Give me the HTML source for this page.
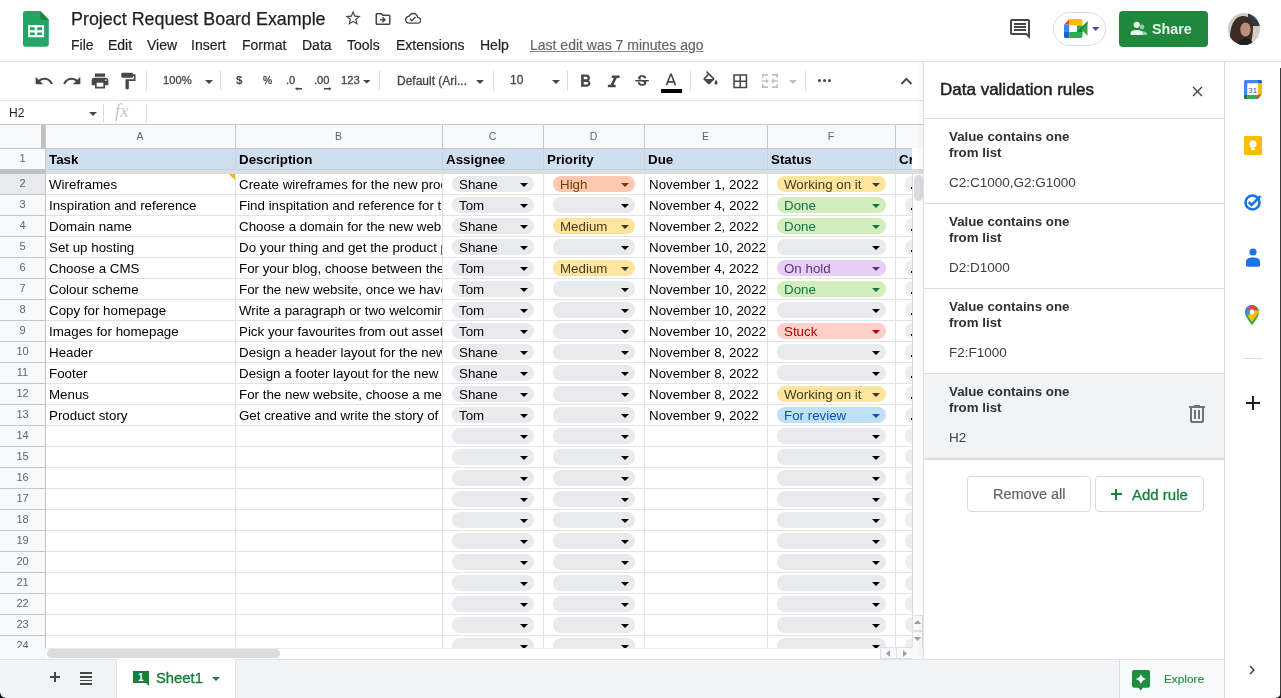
<!DOCTYPE html><html><head><meta charset="utf-8"><style>
html,body{margin:0;padding:0}
body{width:1281px;height:698px;overflow:hidden;position:relative;font-family:"Liberation Sans",sans-serif;background:#fff;color:#202124}
.a{position:absolute}
.t{position:absolute;white-space:nowrap;line-height:1;will-change:transform}
</style></head><body>
<svg class="a" style="left:23px;top:10.7px" width="26" height="36" viewBox="0 0 26 36">
<path d="M2.5 0H17.2L25.8 8.8V33.3C25.8 34.7 24.7 35.8 23.3 35.8H2.5C1.1 35.8 0 34.7 0 33.3V2.5C0 1.1 1.1 0 2.5 0Z" fill="#23A566"/>
<path d="M17.2 0L25.8 8.8H19.2C18.1 8.8 17.2 7.9 17.2 6.8Z" fill="#16873F"/>
<path d="M5.1 14.1H21.1V26.2H5.1Z M6.9 16.3V19.3H11.7V16.3Z M14.2 16.3V19.3H19V16.3Z M6.9 21.4V24.1H11.7V21.4Z M14.2 21.4V24.1H19V21.4Z" fill="#fff" fill-rule="evenodd"/>
</svg>
<div class="t " style="left:71.4px;top:10.85px;font-size:17.9px;color:#1f1f1f;-webkit-text-stroke:0.25px #1f1f1f">Project Request Board Example</div>
<svg class="a" style="left:343.7px;top:9.2px" width="18.2" height="18.2" viewBox="0 0 24 24" preserveAspectRatio="none"><path fill="#444746" d="M22 9.24l-7.19-.62L12 2 9.19 8.63 2 9.24l5.46 4.73L5.82 21 12 17.27 18.18 21l-1.63-7.03L22 9.24zM12 15.4l-3.76 2.27 1-4.28-3.32-2.88 4.38-.38L12 6.1l1.71 4.04 4.38.38-3.32 2.88 1 4.28L12 15.4z"/></svg>
<svg class="a" style="left:373.5px;top:9.8px" width="18" height="18" viewBox="0 0 24 24" preserveAspectRatio="none"><path fill="#444746" d="M20 6h-8l-2-2H4c-1.1 0-2 .9-2 2v12c0 1.1.9 2 2 2h16c1.1 0 2-.9 2-2V8c0-1.1-.9-2-2-2zm0 12H4V6h5.17l2 2H20v10zm-7.84-6H8v2h4.16l-1.59 1.59L11.99 17 16 13.01 11.99 9l-1.41 1.41L12.16 12z"/></svg>
<svg class="a" style="left:404.6px;top:10.05px" width="16.5" height="16.5" viewBox="0 0 24 24" preserveAspectRatio="none"><path fill="#444746" d="M19.35 10.04C18.67 6.59 15.64 4 12 4 9.11 4 6.6 5.64 5.35 8.040 2.34 8.36 0 10.91 0 14c0 3.31 2.69 6 6 6h13c2.76 0 5-2.240 5-5 0-2.64-2.05-4.78-4.65-4.96zM19 18H6c-2.21 0-4-1.79-4-4 0-2.05 1.53-3.76 3.56-3.97l1.07-.11.5-.95C8.08 7.14 9.94 6 12 6c2.62 0 4.88 1.86 5.39 4.43l.3 1.5 1.53.11c1.56.1 2.78 1.41 2.78 2.96 0 1.65-1.35 3-3 3zm-9-3.82l-2.09-2.09L6.5 13.5 10 17l6.01-6.01-1.41-1.41z"/></svg>
<div class="t " style="left:71.2px;top:37.85px;font-size:14px;color:#1f1f1f;-webkit-text-stroke:0.2px #1f1f1f">File</div>
<div class="t " style="left:107.8px;top:37.85px;font-size:14px;color:#1f1f1f;-webkit-text-stroke:0.2px #1f1f1f">Edit</div>
<div class="t " style="left:146.6px;top:37.85px;font-size:14px;color:#1f1f1f;-webkit-text-stroke:0.2px #1f1f1f">View</div>
<div class="t " style="left:191.3px;top:37.85px;font-size:14px;color:#1f1f1f;-webkit-text-stroke:0.2px #1f1f1f">Insert</div>
<div class="t " style="left:242.2px;top:37.85px;font-size:14px;color:#1f1f1f;-webkit-text-stroke:0.2px #1f1f1f">Format</div>
<div class="t " style="left:302.2px;top:37.85px;font-size:14px;color:#1f1f1f;-webkit-text-stroke:0.2px #1f1f1f">Data</div>
<div class="t " style="left:346.5px;top:37.85px;font-size:14px;color:#1f1f1f;-webkit-text-stroke:0.2px #1f1f1f">Tools</div>
<div class="t " style="left:395.6px;top:37.85px;font-size:14px;color:#1f1f1f;-webkit-text-stroke:0.2px #1f1f1f">Extensions</div>
<div class="t " style="left:480px;top:37.85px;font-size:14px;color:#1f1f1f;-webkit-text-stroke:0.2px #1f1f1f">Help</div>
<div class="t " style="left:530.2px;top:37.85px;font-size:14px;color:#5f6368;-webkit-text-stroke:0.15px #5f6368"><span style="text-decoration:underline;text-decoration-color:#80868b">Last edit was 7 minutes ago</span></div>
<svg class="a" style="left:1008px;top:17px" width="24" height="24" viewBox="0 0 24 24" preserveAspectRatio="none"><path fill="#444746" d="M21.99 4c0-1.1-.89-2-1.99-2H4c-1.1 0-2 .9-2 2v12c0 1.1.9 2 2 2h14l4 4-.01-18zM20 4v13.17L18.83 16H4V4h16zM6 12h12v2H6zm0-3h12v2H6zm0-3h12v2H6z"/></svg>
<div class="a" style="left:1053px;top:11.5px;width:53px;height:34px;border:1px solid #dadce0;border-radius:18px;box-sizing:border-box;background:#fff"></div>
<svg class="a" style="left:1064px;top:19px" width="24" height="19" viewBox="0 0 24 19">
<path d="M0 5.5H5.5V13H0Z" fill="#4285f4"/>
<path d="M0 13H5.5V19H1.6C.7 19 0 18.3 0 17.4Z" fill="#1967d2"/>
<path d="M5.5 0V5.5H0Z" fill="#ea4335"/>
<path d="M5.5 0H16.4C17.5 0 18.5 .9 18.5 2V6.5H5.5Z" fill="#fbbc04"/>
<path d="M5.5 13H18.5V16.9C18.5 18.1 17.6 19 16.4 19H5.5Z" fill="#34a853"/>
<path d="M13 6.5H18.5V13H13Z" fill="#34a853"/>
<path d="M13 13L18.5 7.5V13Z" fill="#188038"/>
<path d="M18.5 7.2L23.5 2.2V16.8L18.5 11.8Z" fill="#34a853"/>
<path d="M13 13L23.5 2.2V5L17 11.5Z" fill="#1e8e3e"/>
<path d="M5.5 6.5H13V13H5.5Z" fill="#fff"/>
</svg>
<svg class="a" style="left:1092.3px;top:27px" width="7.5" height="4" viewBox="0 0 8 4" preserveAspectRatio="none"><path d="M0 0H8L4 4Z" fill="#3f51a0"/></svg>
<div class="a" style="left:1119px;top:11px;width:89px;height:36px;background:#1f883d;border-radius:4px"></div>
<svg class="a" style="left:1130px;top:21px" width="18" height="15" viewBox="0 0 18 15">
<circle cx="12" cy="6" r="2.4" fill="#8fcb9f"/>
<path d="M10.5 10.3C13 10 17 10.8 17 12.6V14H11Z" fill="#8fcb9f"/>
<circle cx="6.7" cy="3.8" r="3.1" fill="#e8f5ec"/>
<path d="M0.7 11.8C0.7 9.8 4.2 9 6.7 9C9.2 9 12.7 9.8 12.7 11.8V14H0.7Z" fill="#e8f5ec"/>
</svg>
<div class="t " style="left:1151.5px;top:22.10px;font-size:14.3px;color:#e8f5ec;font-weight:700">Share</div>
<svg class="a" style="left:1228px;top:13px" width="32" height="32" viewBox="0 0 32 32">
<defs><clipPath id="av"><circle cx="16" cy="16" r="16"/></clipPath></defs>
<g clip-path="url(#av)"><rect width="32" height="32" fill="#cfccc6"/>
<rect x="20" y="0" width="12" height="13" fill="#2e3a3f"/>
<path d="M2 32C1 18 4 3 15 3C22 3 25 8 25 14C25 20 24 27 22 32Z" fill="#3d2c25"/>
<ellipse cx="17.5" cy="16.5" rx="5.2" ry="7" fill="#b98f7c"/>
<path d="M9 32C11 27 14 25 18 25C22 25 24 28 26 32Z" fill="#1f1f1f"/>
</g></svg>
<div class="a" style="left:0px;top:61px;width:1281px;height:1px;background:#e0e2e5"></div>
<svg class="a" style="left:34px;top:71px" width="20" height="20" viewBox="0 0 24 24" preserveAspectRatio="none"><path fill="#444746" d="M12.5 8c-2.65 0-5.05.99-6.9 2.6L2 7v9h9l-3.62-3.62c1.39-1.16 3.16-1.88 5.12-1.88 3.54 0 6.55 2.31 7.6 5.5l2.37-.78C21.08 11.03 17.15 8 12.5 8z"/></svg>
<svg class="a" style="left:62px;top:71px" width="20" height="20" viewBox="0 0 24 24" preserveAspectRatio="none"><path fill="#444746" d="M18.4 10.6C16.55 8.99 14.15 8 11.5 8c-4.65 0-8.58 3.03-9.96 7.22L3.9 16c1.05-3.19 4.05-5.5 7.6-5.5 1.95 0 3.73.72 5.12 1.88L13 16h9V7l-3.6 3.6z"/></svg>
<svg class="a" style="left:90px;top:71px" width="20" height="20" viewBox="0 0 24 24" preserveAspectRatio="none"><path fill="#444746" d="M19 8H5c-1.66 0-3 1.34-3 3v6h4v4h12v-4h4v-6c0-1.66-1.34-3-3-3zm-3 11H8v-5h8v5zm3-7c-.55 0-1-.45-1-1s.45-1 1-1 1 .45 1 1-.45 1-1 1zm-1-9H6v4h12V3z"/></svg>
<svg class="a" style="left:118px;top:71px" width="20" height="20" viewBox="0 0 24 24" preserveAspectRatio="none"><path fill="#444746" d="M18 4V3c0-.55-.45-1-1-1H5c-.55 0-1 .45-1 1v4c0 .55.45 1 1 1h12c.55 0 1-.45 1-1V6h1v4H9v11c0 .55.45 1 1 1h2c.55 0 1-.45 1-1v-9h8V4h-3z"/></svg>
<div class="a" style="left:146px;top:71px;width:1px;height:20px;background:#dadce0"></div>
<div class="a" style="left:220px;top:71px;width:1px;height:20px;background:#dadce0"></div>
<div class="a" style="left:379px;top:71px;width:1px;height:20px;background:#dadce0"></div>
<div class="a" style="left:493px;top:71px;width:1px;height:20px;background:#dadce0"></div>
<div class="a" style="left:567px;top:71px;width:1px;height:20px;background:#dadce0"></div>
<div class="a" style="left:690px;top:71px;width:1px;height:20px;background:#dadce0"></div>
<div class="a" style="left:805px;top:71px;width:1px;height:20px;background:#dadce0"></div>
<div class="t " style="left:162.7px;top:74.82px;font-size:11.2px;color:#444746;-webkit-text-stroke:0.3px #444746">100%</div>
<svg class="a" style="left:204.5px;top:79.8px" width="8" height="4" viewBox="0 0 8 4" preserveAspectRatio="none"><path d="M0 0H8L4 4Z" fill="#444746"/></svg>
<div class="t " style="left:236px;top:74.67px;font-size:11.5px;color:#444746;font-weight:700">$</div>
<div class="t " style="left:263.1px;top:75.77px;font-size:10.2px;color:#444746;-webkit-text-stroke:0.3px #444746">%</div>
<div class="t " style="left:286.3px;top:74.92px;font-size:11.2px;color:#444746;-webkit-text-stroke:0.3px #444746">.0</div>
<svg class="a" style="left:294.7px;top:87.3px" width="7.5" height="3.6" viewBox="0 0 7.5 3.6"><path d="M0 1.8L2.6 0V1H7.5V2.6H2.6V3.6Z" fill="#444746"/></svg>
<div class="t " style="left:313.8px;top:74.92px;font-size:11.2px;color:#444746;-webkit-text-stroke:0.3px #444746">.00</div>
<svg class="a" style="left:324.3px;top:87.3px" width="7.5" height="3.6" viewBox="0 0 7.5 3.6"><path d="M7.5 1.8L4.9 0V1H0V2.6H4.9V3.6Z" fill="#444746"/></svg>
<div class="t " style="left:341px;top:74.92px;font-size:11.2px;color:#444746;-webkit-text-stroke:0.3px #444746">123</div>
<svg class="a" style="left:362.7px;top:80.2px" width="7.5" height="3.6" viewBox="0 0 8 4" preserveAspectRatio="none"><path d="M0 0H8L4 4Z" fill="#444746"/></svg>
<div class="t " style="left:396.6px;top:74.84px;font-size:12px;color:#444746;-webkit-text-stroke:0.3px #444746">Default (Ari...</div>
<svg class="a" style="left:476.4px;top:80.3px" width="8" height="4" viewBox="0 0 8 4" preserveAspectRatio="none"><path d="M0 0H8L4 4Z" fill="#444746"/></svg>
<div class="t " style="left:509.9px;top:74.14px;font-size:12px;color:#444746;-webkit-text-stroke:0.3px #444746">10</div>
<svg class="a" style="left:551.5px;top:79.8px" width="8" height="4" viewBox="0 0 8 4" preserveAspectRatio="none"><path d="M0 0H8L4 4Z" fill="#444746"/></svg>
<svg class="a" style="left:574.7px;top:71.4px" width="20.9" height="20.9" viewBox="0 0 24 24" preserveAspectRatio="none"><path fill="#444746" d="M15.6 10.79c.97-.67 1.65-1.77 1.65-2.79 0-2.26-1.75-4-4-4H7v14h7.04c2.09 0 3.71-1.7 3.71-3.79 0-1.52-.86-2.82-2.15-3.42zM10 6.5h3c.83 0 1.5.67 1.5 1.5s-.67 1.5-1.5 1.5h-3v-3zm3.5 9H10v-3h3.5c.83 0 1.5.67 1.5 1.5s-.67 1.5-1.5 1.5z"/></svg>
<svg class="a" style="left:602.05px;top:71.5px" width="23.4" height="20.4" viewBox="0 0 24 24" preserveAspectRatio="none"><path fill="#444746" d="M10 4v3h2.21l-3.42 8H6v3h8v-3h-2.21l3.42-8H18V4z"/></svg>
<svg class="a" style="left:632.8px;top:72.7px" width="18.1" height="17" viewBox="0 0 24 24" preserveAspectRatio="none"><path fill="#444746" d="M7.24 8.75c-.26-.48-.39-1.03-.39-1.67 0-.61.13-1.16.4-1.67.26-.5.63-.93 1.11-1.290.48-.35 1.05-.63 1.7-.83.66-.19 1.39-.29 2.18-.29.81 0 1.54.11 2.21.34.66.22 1.23.54 1.69.94.47.4.83.88 1.08 1.430.25.55.38 1.15.38 1.81h-3.01c0-.31-.05-.59-.15-.85-.09-.27-.24-.49-.44-.68-.2-.19-.45-.33-.75-.44-.3-.1-.66-.16-1.06-.16-.39 0-.74.04-1.03.13-.29.09-.53.21-.72.36-.19.16-.34.34-.44.55-.1.21-.15.43-.15.66 0 .48.25.88.74 1.21.38.25.77.48 1.41.7H7.39c-.05-.08-.11-.17-.15-.25zM21 12v-2H3v2h9.62c.18.07.4.14.55.2.37.17.66.34.87.51.21.17.35.36.43.57.07.2.11.43.11.69 0 .23-.05.45-.14.66-.09.2-.23.38-.42.53-.19.15-.42.26-.71.35-.29.08-.63.13-1.010.13-.43 0-.83-.04-1.18-.13s-.66-.23-.91-.42c-.25-.19-.45-.44-.59-.75-.14-.31-.25-.76-.25-1.21H6.4c0 .55.08 1.13.24 1.58.16.45.37.85.65 1.21.28.35.6.66.98.92.37.26.78.48 1.22.65.44.17.9.3 1.38.39.48.08.96.13 1.44.13.8 0 1.53-.09 2.18-.28s1.21-.45 1.67-.79c.46-.34.82-.77 1.07-1.27s.38-1.07.38-1.71c0-.6-.1-1.14-.31-1.61-.05-.11-.11-.23-.17-.33H21z"/></svg>
<svg class="a" style="left:660.9px;top:70.5px" width="19.9" height="20.1" viewBox="0 0 24 24" preserveAspectRatio="none"><path fill="#444746" d="M11 3L5.5 17h2.25l1.12-3h6.25l1.12 3h2.25L13 3h-2zm-1.38 9L12 5.67 14.38 12H9.62z"/></svg>
<div class="a" style="left:661px;top:89px;width:21px;height:4px;background:#000"></div>
<svg class="a" style="left:701px;top:71px" width="19" height="19" viewBox="0 0 24 24" preserveAspectRatio="none"><path fill="#444746" d="M16.56 8.94L7.62 0 6.21 1.41l2.38 2.38-5.15 5.15c-.59.59-.59 1.54 0 2.12l5.5 5.5c.29.29.68.44 1.06.44s.77-.15 1.06-.44l5.5-5.5c.59-.58.59-1.53 0-2.12zM5.21 10L10 5.21 14.79 10H5.21zM19 11.5s-2 2.17-2 3.5c0 1.1.9 2 2 2s2-.9 2-2c0-1.33-2-3.5-2-3.5z"/></svg>
<svg class="a" style="left:730.8px;top:71.9px" width="18.5" height="18.5" viewBox="0 0 24 24" preserveAspectRatio="none"><path fill="#444746" d="M3 3v18h18V3H3zm8 16H5v-6h6v6zm0-8H5V5h6v6zm8 8h-6v-6h6v6zm0-8h-6V5h6v6z"/></svg>
<svg class="a" style="left:762px;top:74.2px" width="16" height="14" viewBox="0 0 16 14"><path fill="#bdc1c6" d="M0 0H6V1.7H1.7V3.8H0ZM16 0H10V1.7H14.3V3.8H16ZM0 14H6V12.3H1.7V10.2H0ZM16 14H10V12.3H14.3V10.2H16ZM0 6.2H4V4.3L6.9 7L4 9.7V7.8H0ZM16 6.2H12V4.3L9.1 7L12 9.7V7.8H16Z"/></svg>
<svg class="a" style="left:788.7px;top:80px" width="8" height="4" viewBox="0 0 8 4" preserveAspectRatio="none"><path d="M0 0H8L4 4Z" fill="#bdc1c6"/></svg>
<div class="a" style="left:817.5px;top:79px;width:3px;height:3px;background:#444746;border-radius:50%"></div>
<div class="a" style="left:822.5px;top:79px;width:3px;height:3px;background:#444746;border-radius:50%"></div>
<div class="a" style="left:827.5px;top:79px;width:3px;height:3px;background:#444746;border-radius:50%"></div>
<svg class="a" style="left:894.9px;top:69.8px" width="22.8" height="22.8" viewBox="0 0 24 24" preserveAspectRatio="none"><path fill="#444746" d="M12 8l-6 6 1.41 1.41L12 10.83l4.59 4.58L18 14z"/></svg>
<div class="a" style="left:0px;top:100px;width:923px;height:1px;background:#e0e2e5"></div>
<div class="t " style="left:8.5px;top:106.54px;font-size:12px;color:#1f1f1f">H2</div>
<svg class="a" style="left:89.4px;top:112px" width="8" height="4" viewBox="0 0 8 4" preserveAspectRatio="none"><path d="M0 0H8L4 4Z" fill="#444746"/></svg>
<div class="a" style="left:103px;top:104px;width:1px;height:19px;background:#dadce0"></div>
<div class="t " style="left:115px;top:101.64px;font-size:18.5px;color:#c4c7c5;font-family:'Liberation Serif',serif"><i>fx</i></div>
<div class="a" style="left:146px;top:104px;width:1px;height:19px;background:#dadce0"></div>
<div class="a" style="left:0px;top:124px;width:923px;height:1px;background:#c7c7c7"></div>
<div class="a" style="left:0px;top:125px;width:923px;height:23px;background:#f8f9fa"></div>
<div class="a" style="left:0px;top:148px;width:912px;height:1px;background:#c7c7c7"></div>
<div class="a" style="left:41px;top:125px;width:4px;height:23px;background:#c0c0c0"></div>
<div class="t" style="left:45px;width:190px;top:130.86px;font-size:10.5px;text-align:center;color:#5f6368">A</div>
<div class="t" style="left:235px;width:207px;top:130.86px;font-size:10.5px;text-align:center;color:#5f6368">B</div>
<div class="t" style="left:442px;width:101px;top:130.86px;font-size:10.5px;text-align:center;color:#5f6368">C</div>
<div class="t" style="left:543px;width:101px;top:130.86px;font-size:10.5px;text-align:center;color:#5f6368">D</div>
<div class="t" style="left:644px;width:123px;top:130.86px;font-size:10.5px;text-align:center;color:#5f6368">E</div>
<div class="t" style="left:767px;width:128px;top:130.86px;font-size:10.5px;text-align:center;color:#5f6368">F</div>
<div class="a" style="left:235px;top:125px;width:1px;height:23px;background:#c7c7c7"></div>
<div class="a" style="left:442px;top:125px;width:1px;height:23px;background:#c7c7c7"></div>
<div class="a" style="left:543px;top:125px;width:1px;height:23px;background:#c7c7c7"></div>
<div class="a" style="left:644px;top:125px;width:1px;height:23px;background:#c7c7c7"></div>
<div class="a" style="left:767px;top:125px;width:1px;height:23px;background:#c7c7c7"></div>
<div class="a" style="left:895px;top:125px;width:1px;height:23px;background:#c7c7c7"></div>
<div class="a" style="left:45px;top:149px;width:867px;height:20px;background:#cfdff0"></div>
<div class="a" style="left:0px;top:149px;width:45px;height:20px;background:#f8f9fa"></div>
<div class="a" style="left:0px;top:169px;width:45px;height:0px;"></div>
<div class="a" style="left:45px;top:169px;width:867px;height:1px;background:#c5d3e0"></div>
<div class="a" style="left:0px;top:169px;width:45px;height:5px;background:#bfc1c4"></div>
<div class="a" style="left:45px;top:170px;width:867px;height:4px;background:#dadee3"></div>
<div class="a" style="left:912px;top:169px;width:11px;height:5px;background:#dadee3"></div>
<div class="a" style="left:45px;top:125px;width:1px;height:523px;background:#c7c7c7"></div>
<div class="a" style="left:0px;top:174px;width:45px;height:20px;background:#e8eaed"></div>
<div class="a" style="left:0px;top:195px;width:45px;height:453px;background:#f8f9fa"></div>
<div class="a" style="left:46px;top:174px;width:866px;height:474px;overflow:hidden">
<div class="a" style="left:0px;top:20px;width:866px;height:1px;background:#e2e3e3"></div>
<div class="t" style="left:3px;top:3.72px;font-size:13.33px;width:185px;overflow:hidden;padding-bottom:4px;color:#000">Wireframes</div>
<div class="t" style="left:193px;top:3.72px;font-size:13.33px;width:203px;overflow:hidden;padding-bottom:4px;color:#000">Create wireframes for the new product</div>
<div class="a" style="left:406px;top:2px;width:82px;height:16px;background:#e8eaed;border-radius:8px"></div>
<div class="t" style="left:412.5px;top:4.12px;font-size:13.33px;color:#000">Shane</div>
<svg class="a" style="left:473.5px;top:8.5px" width="8" height="4" viewBox="0 0 8 4"><path d="M0 0H8L4 4Z" fill="#000"/></svg>
<div class="a" style="left:507px;top:2px;width:82px;height:16px;background:#fcc9b0;border-radius:8px"></div>
<div class="t" style="left:513.5px;top:4.12px;font-size:13.33px;color:#753800">High</div>
<svg class="a" style="left:574.5px;top:8.5px" width="8" height="4" viewBox="0 0 8 4"><path d="M0 0H8L4 4Z" fill="#753800"/></svg>
<div class="t" style="left:602.5px;top:3.72px;font-size:13.33px;width:118px;overflow:hidden;padding-bottom:4px;color:#000">November 1, 2022</div>
<div class="a" style="left:731px;top:2px;width:109px;height:16px;background:#fde59e;border-radius:8px"></div>
<div class="t" style="left:737.5px;top:4.12px;font-size:13.33px;color:#473821">Working on it</div>
<svg class="a" style="left:825.5px;top:8.5px" width="8" height="4" viewBox="0 0 8 4"><path d="M0 0H8L4 4Z" fill="#473821"/></svg>
<div class="a" style="left:859px;top:2px;width:186px;height:16px;background:#eceef0;border-radius:8px"></div>
<svg class="a" style="left:1030.5px;top:8.5px" width="8" height="4" viewBox="0 0 8 4"><path d="M0 0H8L4 4Z" fill="#000"/></svg>
<div class="a" style="left:864.5px;top:13.300000000000011px;width:1.5px;height:1.8px;background:#000"></div>
<div class="a" style="left:0px;top:41px;width:866px;height:1px;background:#e2e3e3"></div>
<div class="t" style="left:3px;top:24.72px;font-size:13.33px;width:185px;overflow:hidden;padding-bottom:4px;color:#000">Inspiration and reference</div>
<div class="t" style="left:193px;top:24.72px;font-size:13.33px;width:203px;overflow:hidden;padding-bottom:4px;color:#000">Find inspitation and reference for the</div>
<div class="a" style="left:406px;top:23px;width:82px;height:16px;background:#e8eaed;border-radius:8px"></div>
<div class="t" style="left:412.5px;top:25.12px;font-size:13.33px;color:#000">Tom</div>
<svg class="a" style="left:473.5px;top:29.5px" width="8" height="4" viewBox="0 0 8 4"><path d="M0 0H8L4 4Z" fill="#000"/></svg>
<div class="a" style="left:507px;top:23px;width:82px;height:16px;background:#e8eaed;border-radius:8px"></div>
<svg class="a" style="left:574.5px;top:29.5px" width="8" height="4" viewBox="0 0 8 4"><path d="M0 0H8L4 4Z" fill="#000"/></svg>
<div class="t" style="left:602.5px;top:24.72px;font-size:13.33px;width:118px;overflow:hidden;padding-bottom:4px;color:#000">November 4, 2022</div>
<div class="a" style="left:731px;top:23px;width:109px;height:16px;background:#d4edbc;border-radius:8px"></div>
<div class="t" style="left:737.5px;top:25.12px;font-size:13.33px;color:#11734b">Done</div>
<svg class="a" style="left:825.5px;top:29.5px" width="8" height="4" viewBox="0 0 8 4"><path d="M0 0H8L4 4Z" fill="#11734b"/></svg>
<div class="a" style="left:859px;top:23px;width:186px;height:16px;background:#eceef0;border-radius:8px"></div>
<svg class="a" style="left:1030.5px;top:29.5px" width="8" height="4" viewBox="0 0 8 4"><path d="M0 0H8L4 4Z" fill="#000"/></svg>
<div class="a" style="left:864.5px;top:34.30000000000001px;width:1.5px;height:1.8px;background:#000"></div>
<div class="a" style="left:0px;top:62px;width:866px;height:1px;background:#e2e3e3"></div>
<div class="t" style="left:3px;top:45.72px;font-size:13.33px;width:185px;overflow:hidden;padding-bottom:4px;color:#000">Domain name</div>
<div class="t" style="left:193px;top:45.72px;font-size:13.33px;width:203px;overflow:hidden;padding-bottom:4px;color:#000">Choose a domain for the new website</div>
<div class="a" style="left:406px;top:44px;width:82px;height:16px;background:#e8eaed;border-radius:8px"></div>
<div class="t" style="left:412.5px;top:46.12px;font-size:13.33px;color:#000">Shane</div>
<svg class="a" style="left:473.5px;top:50.5px" width="8" height="4" viewBox="0 0 8 4"><path d="M0 0H8L4 4Z" fill="#000"/></svg>
<div class="a" style="left:507px;top:44px;width:82px;height:16px;background:#fde59e;border-radius:8px"></div>
<div class="t" style="left:513.5px;top:46.12px;font-size:13.33px;color:#473821">Medium</div>
<svg class="a" style="left:574.5px;top:50.5px" width="8" height="4" viewBox="0 0 8 4"><path d="M0 0H8L4 4Z" fill="#473821"/></svg>
<div class="t" style="left:602.5px;top:45.72px;font-size:13.33px;width:118px;overflow:hidden;padding-bottom:4px;color:#000">November 2, 2022</div>
<div class="a" style="left:731px;top:44px;width:109px;height:16px;background:#d4edbc;border-radius:8px"></div>
<div class="t" style="left:737.5px;top:46.12px;font-size:13.33px;color:#11734b">Done</div>
<svg class="a" style="left:825.5px;top:50.5px" width="8" height="4" viewBox="0 0 8 4"><path d="M0 0H8L4 4Z" fill="#11734b"/></svg>
<div class="a" style="left:859px;top:44px;width:186px;height:16px;background:#eceef0;border-radius:8px"></div>
<svg class="a" style="left:1030.5px;top:50.5px" width="8" height="4" viewBox="0 0 8 4"><path d="M0 0H8L4 4Z" fill="#000"/></svg>
<div class="a" style="left:864.5px;top:55.30000000000001px;width:1.5px;height:1.8px;background:#000"></div>
<div class="a" style="left:0px;top:83px;width:866px;height:1px;background:#e2e3e3"></div>
<div class="t" style="left:3px;top:66.72px;font-size:13.33px;width:185px;overflow:hidden;padding-bottom:4px;color:#000">Set up hosting</div>
<div class="t" style="left:193px;top:66.72px;font-size:13.33px;width:203px;overflow:hidden;padding-bottom:4px;color:#000">Do your thing and get the product page</div>
<div class="a" style="left:406px;top:65px;width:82px;height:16px;background:#e8eaed;border-radius:8px"></div>
<div class="t" style="left:412.5px;top:67.12px;font-size:13.33px;color:#000">Shane</div>
<svg class="a" style="left:473.5px;top:71.5px" width="8" height="4" viewBox="0 0 8 4"><path d="M0 0H8L4 4Z" fill="#000"/></svg>
<div class="a" style="left:507px;top:65px;width:82px;height:16px;background:#e8eaed;border-radius:8px"></div>
<svg class="a" style="left:574.5px;top:71.5px" width="8" height="4" viewBox="0 0 8 4"><path d="M0 0H8L4 4Z" fill="#000"/></svg>
<div class="t" style="left:602.5px;top:66.72px;font-size:13.33px;width:118px;overflow:hidden;padding-bottom:4px;color:#000">November 10, 2022</div>
<div class="a" style="left:731px;top:65px;width:109px;height:16px;background:#e8eaed;border-radius:8px"></div>
<svg class="a" style="left:825.5px;top:71.5px" width="8" height="4" viewBox="0 0 8 4"><path d="M0 0H8L4 4Z" fill="#000"/></svg>
<div class="a" style="left:859px;top:65px;width:186px;height:16px;background:#eceef0;border-radius:8px"></div>
<svg class="a" style="left:1030.5px;top:71.5px" width="8" height="4" viewBox="0 0 8 4"><path d="M0 0H8L4 4Z" fill="#000"/></svg>
<div class="a" style="left:864.5px;top:76.30000000000001px;width:1.5px;height:1.8px;background:#000"></div>
<div class="a" style="left:0px;top:104px;width:866px;height:1px;background:#e2e3e3"></div>
<div class="t" style="left:3px;top:87.72px;font-size:13.33px;width:185px;overflow:hidden;padding-bottom:4px;color:#000">Choose a CMS</div>
<div class="t" style="left:193px;top:87.72px;font-size:13.33px;width:203px;overflow:hidden;padding-bottom:4px;color:#000">For your blog, choose between the</div>
<div class="a" style="left:406px;top:86px;width:82px;height:16px;background:#e8eaed;border-radius:8px"></div>
<div class="t" style="left:412.5px;top:88.12px;font-size:13.33px;color:#000">Tom</div>
<svg class="a" style="left:473.5px;top:92.5px" width="8" height="4" viewBox="0 0 8 4"><path d="M0 0H8L4 4Z" fill="#000"/></svg>
<div class="a" style="left:507px;top:86px;width:82px;height:16px;background:#fde59e;border-radius:8px"></div>
<div class="t" style="left:513.5px;top:88.12px;font-size:13.33px;color:#473821">Medium</div>
<svg class="a" style="left:574.5px;top:92.5px" width="8" height="4" viewBox="0 0 8 4"><path d="M0 0H8L4 4Z" fill="#473821"/></svg>
<div class="t" style="left:602.5px;top:87.72px;font-size:13.33px;width:118px;overflow:hidden;padding-bottom:4px;color:#000">November 4, 2022</div>
<div class="a" style="left:731px;top:86px;width:109px;height:16px;background:#e6cff2;border-radius:8px"></div>
<div class="t" style="left:737.5px;top:88.12px;font-size:13.33px;color:#5a3286">On hold</div>
<svg class="a" style="left:825.5px;top:92.5px" width="8" height="4" viewBox="0 0 8 4"><path d="M0 0H8L4 4Z" fill="#5a3286"/></svg>
<div class="a" style="left:859px;top:86px;width:186px;height:16px;background:#eceef0;border-radius:8px"></div>
<svg class="a" style="left:1030.5px;top:92.5px" width="8" height="4" viewBox="0 0 8 4"><path d="M0 0H8L4 4Z" fill="#000"/></svg>
<div class="a" style="left:864.5px;top:97.30000000000001px;width:1.5px;height:1.8px;background:#000"></div>
<div class="a" style="left:0px;top:125px;width:866px;height:1px;background:#e2e3e3"></div>
<div class="t" style="left:3px;top:108.72px;font-size:13.33px;width:185px;overflow:hidden;padding-bottom:4px;color:#000">Colour scheme</div>
<div class="t" style="left:193px;top:108.72px;font-size:13.33px;width:203px;overflow:hidden;padding-bottom:4px;color:#000">For the new website, once we have</div>
<div class="a" style="left:406px;top:107px;width:82px;height:16px;background:#e8eaed;border-radius:8px"></div>
<div class="t" style="left:412.5px;top:109.12px;font-size:13.33px;color:#000">Tom</div>
<svg class="a" style="left:473.5px;top:113.5px" width="8" height="4" viewBox="0 0 8 4"><path d="M0 0H8L4 4Z" fill="#000"/></svg>
<div class="a" style="left:507px;top:107px;width:82px;height:16px;background:#e8eaed;border-radius:8px"></div>
<svg class="a" style="left:574.5px;top:113.5px" width="8" height="4" viewBox="0 0 8 4"><path d="M0 0H8L4 4Z" fill="#000"/></svg>
<div class="t" style="left:602.5px;top:108.72px;font-size:13.33px;width:118px;overflow:hidden;padding-bottom:4px;color:#000">November 10, 2022</div>
<div class="a" style="left:731px;top:107px;width:109px;height:16px;background:#d4edbc;border-radius:8px"></div>
<div class="t" style="left:737.5px;top:109.12px;font-size:13.33px;color:#11734b">Done</div>
<svg class="a" style="left:825.5px;top:113.5px" width="8" height="4" viewBox="0 0 8 4"><path d="M0 0H8L4 4Z" fill="#11734b"/></svg>
<div class="a" style="left:859px;top:107px;width:186px;height:16px;background:#eceef0;border-radius:8px"></div>
<svg class="a" style="left:1030.5px;top:113.5px" width="8" height="4" viewBox="0 0 8 4"><path d="M0 0H8L4 4Z" fill="#000"/></svg>
<div class="a" style="left:864.5px;top:118.30000000000001px;width:1.5px;height:1.8px;background:#000"></div>
<div class="a" style="left:0px;top:146px;width:866px;height:1px;background:#e2e3e3"></div>
<div class="t" style="left:3px;top:129.72px;font-size:13.33px;width:185px;overflow:hidden;padding-bottom:4px;color:#000">Copy for homepage</div>
<div class="t" style="left:193px;top:129.72px;font-size:13.33px;width:203px;overflow:hidden;padding-bottom:4px;color:#000">Write a paragraph or two welcoming</div>
<div class="a" style="left:406px;top:128px;width:82px;height:16px;background:#e8eaed;border-radius:8px"></div>
<div class="t" style="left:412.5px;top:130.12px;font-size:13.33px;color:#000">Tom</div>
<svg class="a" style="left:473.5px;top:134.5px" width="8" height="4" viewBox="0 0 8 4"><path d="M0 0H8L4 4Z" fill="#000"/></svg>
<div class="a" style="left:507px;top:128px;width:82px;height:16px;background:#e8eaed;border-radius:8px"></div>
<svg class="a" style="left:574.5px;top:134.5px" width="8" height="4" viewBox="0 0 8 4"><path d="M0 0H8L4 4Z" fill="#000"/></svg>
<div class="t" style="left:602.5px;top:129.72px;font-size:13.33px;width:118px;overflow:hidden;padding-bottom:4px;color:#000">November 10, 2022</div>
<div class="a" style="left:731px;top:128px;width:109px;height:16px;background:#e8eaed;border-radius:8px"></div>
<svg class="a" style="left:825.5px;top:134.5px" width="8" height="4" viewBox="0 0 8 4"><path d="M0 0H8L4 4Z" fill="#000"/></svg>
<div class="a" style="left:859px;top:128px;width:186px;height:16px;background:#eceef0;border-radius:8px"></div>
<svg class="a" style="left:1030.5px;top:134.5px" width="8" height="4" viewBox="0 0 8 4"><path d="M0 0H8L4 4Z" fill="#000"/></svg>
<div class="a" style="left:864.5px;top:139.3px;width:1.5px;height:1.8px;background:#000"></div>
<div class="a" style="left:0px;top:167px;width:866px;height:1px;background:#e2e3e3"></div>
<div class="t" style="left:3px;top:150.72px;font-size:13.33px;width:185px;overflow:hidden;padding-bottom:4px;color:#000">Images for homepage</div>
<div class="t" style="left:193px;top:150.72px;font-size:13.33px;width:203px;overflow:hidden;padding-bottom:4px;color:#000">Pick your favourites from out assets</div>
<div class="a" style="left:406px;top:149px;width:82px;height:16px;background:#e8eaed;border-radius:8px"></div>
<div class="t" style="left:412.5px;top:151.12px;font-size:13.33px;color:#000">Tom</div>
<svg class="a" style="left:473.5px;top:155.5px" width="8" height="4" viewBox="0 0 8 4"><path d="M0 0H8L4 4Z" fill="#000"/></svg>
<div class="a" style="left:507px;top:149px;width:82px;height:16px;background:#e8eaed;border-radius:8px"></div>
<svg class="a" style="left:574.5px;top:155.5px" width="8" height="4" viewBox="0 0 8 4"><path d="M0 0H8L4 4Z" fill="#000"/></svg>
<div class="t" style="left:602.5px;top:150.72px;font-size:13.33px;width:118px;overflow:hidden;padding-bottom:4px;color:#000">November 10, 2022</div>
<div class="a" style="left:731px;top:149px;width:109px;height:16px;background:#ffcfc9;border-radius:8px"></div>
<div class="t" style="left:737.5px;top:151.12px;font-size:13.33px;color:#b10202">Stuck</div>
<svg class="a" style="left:825.5px;top:155.5px" width="8" height="4" viewBox="0 0 8 4"><path d="M0 0H8L4 4Z" fill="#b10202"/></svg>
<div class="a" style="left:859px;top:149px;width:186px;height:16px;background:#eceef0;border-radius:8px"></div>
<svg class="a" style="left:1030.5px;top:155.5px" width="8" height="4" viewBox="0 0 8 4"><path d="M0 0H8L4 4Z" fill="#000"/></svg>
<div class="a" style="left:864.5px;top:160.3px;width:1.5px;height:1.8px;background:#000"></div>
<div class="a" style="left:0px;top:188px;width:866px;height:1px;background:#e2e3e3"></div>
<div class="t" style="left:3px;top:171.72px;font-size:13.33px;width:185px;overflow:hidden;padding-bottom:4px;color:#000">Header</div>
<div class="t" style="left:193px;top:171.72px;font-size:13.33px;width:203px;overflow:hidden;padding-bottom:4px;color:#000">Design a header layout for the new</div>
<div class="a" style="left:406px;top:170px;width:82px;height:16px;background:#e8eaed;border-radius:8px"></div>
<div class="t" style="left:412.5px;top:172.12px;font-size:13.33px;color:#000">Shane</div>
<svg class="a" style="left:473.5px;top:176.5px" width="8" height="4" viewBox="0 0 8 4"><path d="M0 0H8L4 4Z" fill="#000"/></svg>
<div class="a" style="left:507px;top:170px;width:82px;height:16px;background:#e8eaed;border-radius:8px"></div>
<svg class="a" style="left:574.5px;top:176.5px" width="8" height="4" viewBox="0 0 8 4"><path d="M0 0H8L4 4Z" fill="#000"/></svg>
<div class="t" style="left:602.5px;top:171.72px;font-size:13.33px;width:118px;overflow:hidden;padding-bottom:4px;color:#000">November 8, 2022</div>
<div class="a" style="left:731px;top:170px;width:109px;height:16px;background:#e8eaed;border-radius:8px"></div>
<svg class="a" style="left:825.5px;top:176.5px" width="8" height="4" viewBox="0 0 8 4"><path d="M0 0H8L4 4Z" fill="#000"/></svg>
<div class="a" style="left:859px;top:170px;width:186px;height:16px;background:#eceef0;border-radius:8px"></div>
<svg class="a" style="left:1030.5px;top:176.5px" width="8" height="4" viewBox="0 0 8 4"><path d="M0 0H8L4 4Z" fill="#000"/></svg>
<div class="a" style="left:864.5px;top:181.3px;width:1.5px;height:1.8px;background:#000"></div>
<div class="a" style="left:0px;top:209px;width:866px;height:1px;background:#e2e3e3"></div>
<div class="t" style="left:3px;top:192.72px;font-size:13.33px;width:185px;overflow:hidden;padding-bottom:4px;color:#000">Footer</div>
<div class="t" style="left:193px;top:192.72px;font-size:13.33px;width:203px;overflow:hidden;padding-bottom:4px;color:#000">Design a footer layout for the new</div>
<div class="a" style="left:406px;top:191px;width:82px;height:16px;background:#e8eaed;border-radius:8px"></div>
<div class="t" style="left:412.5px;top:193.12px;font-size:13.33px;color:#000">Shane</div>
<svg class="a" style="left:473.5px;top:197.5px" width="8" height="4" viewBox="0 0 8 4"><path d="M0 0H8L4 4Z" fill="#000"/></svg>
<div class="a" style="left:507px;top:191px;width:82px;height:16px;background:#e8eaed;border-radius:8px"></div>
<svg class="a" style="left:574.5px;top:197.5px" width="8" height="4" viewBox="0 0 8 4"><path d="M0 0H8L4 4Z" fill="#000"/></svg>
<div class="t" style="left:602.5px;top:192.72px;font-size:13.33px;width:118px;overflow:hidden;padding-bottom:4px;color:#000">November 8, 2022</div>
<div class="a" style="left:731px;top:191px;width:109px;height:16px;background:#e8eaed;border-radius:8px"></div>
<svg class="a" style="left:825.5px;top:197.5px" width="8" height="4" viewBox="0 0 8 4"><path d="M0 0H8L4 4Z" fill="#000"/></svg>
<div class="a" style="left:859px;top:191px;width:186px;height:16px;background:#eceef0;border-radius:8px"></div>
<svg class="a" style="left:1030.5px;top:197.5px" width="8" height="4" viewBox="0 0 8 4"><path d="M0 0H8L4 4Z" fill="#000"/></svg>
<div class="a" style="left:864.5px;top:202.3px;width:1.5px;height:1.8px;background:#000"></div>
<div class="a" style="left:0px;top:230px;width:866px;height:1px;background:#e2e3e3"></div>
<div class="t" style="left:3px;top:213.72px;font-size:13.33px;width:185px;overflow:hidden;padding-bottom:4px;color:#000">Menus</div>
<div class="t" style="left:193px;top:213.72px;font-size:13.33px;width:203px;overflow:hidden;padding-bottom:4px;color:#000">For the new website, choose a menu</div>
<div class="a" style="left:406px;top:212px;width:82px;height:16px;background:#e8eaed;border-radius:8px"></div>
<div class="t" style="left:412.5px;top:214.12px;font-size:13.33px;color:#000">Shane</div>
<svg class="a" style="left:473.5px;top:218.5px" width="8" height="4" viewBox="0 0 8 4"><path d="M0 0H8L4 4Z" fill="#000"/></svg>
<div class="a" style="left:507px;top:212px;width:82px;height:16px;background:#e8eaed;border-radius:8px"></div>
<svg class="a" style="left:574.5px;top:218.5px" width="8" height="4" viewBox="0 0 8 4"><path d="M0 0H8L4 4Z" fill="#000"/></svg>
<div class="t" style="left:602.5px;top:213.72px;font-size:13.33px;width:118px;overflow:hidden;padding-bottom:4px;color:#000">November 8, 2022</div>
<div class="a" style="left:731px;top:212px;width:109px;height:16px;background:#fde59e;border-radius:8px"></div>
<div class="t" style="left:737.5px;top:214.12px;font-size:13.33px;color:#473821">Working on it</div>
<svg class="a" style="left:825.5px;top:218.5px" width="8" height="4" viewBox="0 0 8 4"><path d="M0 0H8L4 4Z" fill="#473821"/></svg>
<div class="a" style="left:859px;top:212px;width:186px;height:16px;background:#eceef0;border-radius:8px"></div>
<svg class="a" style="left:1030.5px;top:218.5px" width="8" height="4" viewBox="0 0 8 4"><path d="M0 0H8L4 4Z" fill="#000"/></svg>
<div class="a" style="left:864.5px;top:223.3px;width:1.5px;height:1.8px;background:#000"></div>
<div class="a" style="left:0px;top:251px;width:866px;height:1px;background:#e2e3e3"></div>
<div class="t" style="left:3px;top:234.72px;font-size:13.33px;width:185px;overflow:hidden;padding-bottom:4px;color:#000">Product story</div>
<div class="t" style="left:193px;top:234.72px;font-size:13.33px;width:203px;overflow:hidden;padding-bottom:4px;color:#000">Get creative and write the story of</div>
<div class="a" style="left:406px;top:233px;width:82px;height:16px;background:#e8eaed;border-radius:8px"></div>
<div class="t" style="left:412.5px;top:235.12px;font-size:13.33px;color:#000">Tom</div>
<svg class="a" style="left:473.5px;top:239.5px" width="8" height="4" viewBox="0 0 8 4"><path d="M0 0H8L4 4Z" fill="#000"/></svg>
<div class="a" style="left:507px;top:233px;width:82px;height:16px;background:#e8eaed;border-radius:8px"></div>
<svg class="a" style="left:574.5px;top:239.5px" width="8" height="4" viewBox="0 0 8 4"><path d="M0 0H8L4 4Z" fill="#000"/></svg>
<div class="t" style="left:602.5px;top:234.72px;font-size:13.33px;width:118px;overflow:hidden;padding-bottom:4px;color:#000">November 9, 2022</div>
<div class="a" style="left:731px;top:233px;width:109px;height:16px;background:#bfe1f6;border-radius:8px"></div>
<div class="t" style="left:737.5px;top:235.12px;font-size:13.33px;color:#0a53a8">For review</div>
<svg class="a" style="left:825.5px;top:239.5px" width="8" height="4" viewBox="0 0 8 4"><path d="M0 0H8L4 4Z" fill="#0a53a8"/></svg>
<div class="a" style="left:859px;top:233px;width:186px;height:16px;background:#eceef0;border-radius:8px"></div>
<svg class="a" style="left:1030.5px;top:239.5px" width="8" height="4" viewBox="0 0 8 4"><path d="M0 0H8L4 4Z" fill="#000"/></svg>
<div class="a" style="left:864.5px;top:244.3px;width:1.5px;height:1.8px;background:#000"></div>
<div class="a" style="left:0px;top:272px;width:866px;height:1px;background:#e2e3e3"></div>
<div class="a" style="left:406px;top:254px;width:82px;height:16px;background:#e8eaed;border-radius:8px"></div>
<svg class="a" style="left:473.5px;top:260.5px" width="8" height="4" viewBox="0 0 8 4"><path d="M0 0H8L4 4Z" fill="#000"/></svg>
<div class="a" style="left:507px;top:254px;width:82px;height:16px;background:#e8eaed;border-radius:8px"></div>
<svg class="a" style="left:574.5px;top:260.5px" width="8" height="4" viewBox="0 0 8 4"><path d="M0 0H8L4 4Z" fill="#000"/></svg>
<div class="a" style="left:731px;top:254px;width:109px;height:16px;background:#e8eaed;border-radius:8px"></div>
<svg class="a" style="left:825.5px;top:260.5px" width="8" height="4" viewBox="0 0 8 4"><path d="M0 0H8L4 4Z" fill="#000"/></svg>
<div class="a" style="left:859px;top:254px;width:186px;height:16px;background:#eceef0;border-radius:8px"></div>
<svg class="a" style="left:1030.5px;top:260.5px" width="8" height="4" viewBox="0 0 8 4"><path d="M0 0H8L4 4Z" fill="#000"/></svg>
<div class="a" style="left:0px;top:293px;width:866px;height:1px;background:#e2e3e3"></div>
<div class="a" style="left:406px;top:275px;width:82px;height:16px;background:#e8eaed;border-radius:8px"></div>
<svg class="a" style="left:473.5px;top:281.5px" width="8" height="4" viewBox="0 0 8 4"><path d="M0 0H8L4 4Z" fill="#000"/></svg>
<div class="a" style="left:507px;top:275px;width:82px;height:16px;background:#e8eaed;border-radius:8px"></div>
<svg class="a" style="left:574.5px;top:281.5px" width="8" height="4" viewBox="0 0 8 4"><path d="M0 0H8L4 4Z" fill="#000"/></svg>
<div class="a" style="left:731px;top:275px;width:109px;height:16px;background:#e8eaed;border-radius:8px"></div>
<svg class="a" style="left:825.5px;top:281.5px" width="8" height="4" viewBox="0 0 8 4"><path d="M0 0H8L4 4Z" fill="#000"/></svg>
<div class="a" style="left:859px;top:275px;width:186px;height:16px;background:#eceef0;border-radius:8px"></div>
<svg class="a" style="left:1030.5px;top:281.5px" width="8" height="4" viewBox="0 0 8 4"><path d="M0 0H8L4 4Z" fill="#000"/></svg>
<div class="a" style="left:0px;top:314px;width:866px;height:1px;background:#e2e3e3"></div>
<div class="a" style="left:406px;top:296px;width:82px;height:16px;background:#e8eaed;border-radius:8px"></div>
<svg class="a" style="left:473.5px;top:302.5px" width="8" height="4" viewBox="0 0 8 4"><path d="M0 0H8L4 4Z" fill="#000"/></svg>
<div class="a" style="left:507px;top:296px;width:82px;height:16px;background:#e8eaed;border-radius:8px"></div>
<svg class="a" style="left:574.5px;top:302.5px" width="8" height="4" viewBox="0 0 8 4"><path d="M0 0H8L4 4Z" fill="#000"/></svg>
<div class="a" style="left:731px;top:296px;width:109px;height:16px;background:#e8eaed;border-radius:8px"></div>
<svg class="a" style="left:825.5px;top:302.5px" width="8" height="4" viewBox="0 0 8 4"><path d="M0 0H8L4 4Z" fill="#000"/></svg>
<div class="a" style="left:859px;top:296px;width:186px;height:16px;background:#eceef0;border-radius:8px"></div>
<svg class="a" style="left:1030.5px;top:302.5px" width="8" height="4" viewBox="0 0 8 4"><path d="M0 0H8L4 4Z" fill="#000"/></svg>
<div class="a" style="left:0px;top:335px;width:866px;height:1px;background:#e2e3e3"></div>
<div class="a" style="left:406px;top:317px;width:82px;height:16px;background:#e8eaed;border-radius:8px"></div>
<svg class="a" style="left:473.5px;top:323.5px" width="8" height="4" viewBox="0 0 8 4"><path d="M0 0H8L4 4Z" fill="#000"/></svg>
<div class="a" style="left:507px;top:317px;width:82px;height:16px;background:#e8eaed;border-radius:8px"></div>
<svg class="a" style="left:574.5px;top:323.5px" width="8" height="4" viewBox="0 0 8 4"><path d="M0 0H8L4 4Z" fill="#000"/></svg>
<div class="a" style="left:731px;top:317px;width:109px;height:16px;background:#e8eaed;border-radius:8px"></div>
<svg class="a" style="left:825.5px;top:323.5px" width="8" height="4" viewBox="0 0 8 4"><path d="M0 0H8L4 4Z" fill="#000"/></svg>
<div class="a" style="left:859px;top:317px;width:186px;height:16px;background:#eceef0;border-radius:8px"></div>
<svg class="a" style="left:1030.5px;top:323.5px" width="8" height="4" viewBox="0 0 8 4"><path d="M0 0H8L4 4Z" fill="#000"/></svg>
<div class="a" style="left:0px;top:356px;width:866px;height:1px;background:#e2e3e3"></div>
<div class="a" style="left:406px;top:338px;width:82px;height:16px;background:#e8eaed;border-radius:8px"></div>
<svg class="a" style="left:473.5px;top:344.5px" width="8" height="4" viewBox="0 0 8 4"><path d="M0 0H8L4 4Z" fill="#000"/></svg>
<div class="a" style="left:507px;top:338px;width:82px;height:16px;background:#e8eaed;border-radius:8px"></div>
<svg class="a" style="left:574.5px;top:344.5px" width="8" height="4" viewBox="0 0 8 4"><path d="M0 0H8L4 4Z" fill="#000"/></svg>
<div class="a" style="left:731px;top:338px;width:109px;height:16px;background:#e8eaed;border-radius:8px"></div>
<svg class="a" style="left:825.5px;top:344.5px" width="8" height="4" viewBox="0 0 8 4"><path d="M0 0H8L4 4Z" fill="#000"/></svg>
<div class="a" style="left:859px;top:338px;width:186px;height:16px;background:#eceef0;border-radius:8px"></div>
<svg class="a" style="left:1030.5px;top:344.5px" width="8" height="4" viewBox="0 0 8 4"><path d="M0 0H8L4 4Z" fill="#000"/></svg>
<div class="a" style="left:0px;top:377px;width:866px;height:1px;background:#e2e3e3"></div>
<div class="a" style="left:406px;top:359px;width:82px;height:16px;background:#e8eaed;border-radius:8px"></div>
<svg class="a" style="left:473.5px;top:365.5px" width="8" height="4" viewBox="0 0 8 4"><path d="M0 0H8L4 4Z" fill="#000"/></svg>
<div class="a" style="left:507px;top:359px;width:82px;height:16px;background:#e8eaed;border-radius:8px"></div>
<svg class="a" style="left:574.5px;top:365.5px" width="8" height="4" viewBox="0 0 8 4"><path d="M0 0H8L4 4Z" fill="#000"/></svg>
<div class="a" style="left:731px;top:359px;width:109px;height:16px;background:#e8eaed;border-radius:8px"></div>
<svg class="a" style="left:825.5px;top:365.5px" width="8" height="4" viewBox="0 0 8 4"><path d="M0 0H8L4 4Z" fill="#000"/></svg>
<div class="a" style="left:859px;top:359px;width:186px;height:16px;background:#eceef0;border-radius:8px"></div>
<svg class="a" style="left:1030.5px;top:365.5px" width="8" height="4" viewBox="0 0 8 4"><path d="M0 0H8L4 4Z" fill="#000"/></svg>
<div class="a" style="left:0px;top:398px;width:866px;height:1px;background:#e2e3e3"></div>
<div class="a" style="left:406px;top:380px;width:82px;height:16px;background:#e8eaed;border-radius:8px"></div>
<svg class="a" style="left:473.5px;top:386.5px" width="8" height="4" viewBox="0 0 8 4"><path d="M0 0H8L4 4Z" fill="#000"/></svg>
<div class="a" style="left:507px;top:380px;width:82px;height:16px;background:#e8eaed;border-radius:8px"></div>
<svg class="a" style="left:574.5px;top:386.5px" width="8" height="4" viewBox="0 0 8 4"><path d="M0 0H8L4 4Z" fill="#000"/></svg>
<div class="a" style="left:731px;top:380px;width:109px;height:16px;background:#e8eaed;border-radius:8px"></div>
<svg class="a" style="left:825.5px;top:386.5px" width="8" height="4" viewBox="0 0 8 4"><path d="M0 0H8L4 4Z" fill="#000"/></svg>
<div class="a" style="left:859px;top:380px;width:186px;height:16px;background:#eceef0;border-radius:8px"></div>
<svg class="a" style="left:1030.5px;top:386.5px" width="8" height="4" viewBox="0 0 8 4"><path d="M0 0H8L4 4Z" fill="#000"/></svg>
<div class="a" style="left:0px;top:419px;width:866px;height:1px;background:#e2e3e3"></div>
<div class="a" style="left:406px;top:401px;width:82px;height:16px;background:#e8eaed;border-radius:8px"></div>
<svg class="a" style="left:473.5px;top:407.5px" width="8" height="4" viewBox="0 0 8 4"><path d="M0 0H8L4 4Z" fill="#000"/></svg>
<div class="a" style="left:507px;top:401px;width:82px;height:16px;background:#e8eaed;border-radius:8px"></div>
<svg class="a" style="left:574.5px;top:407.5px" width="8" height="4" viewBox="0 0 8 4"><path d="M0 0H8L4 4Z" fill="#000"/></svg>
<div class="a" style="left:731px;top:401px;width:109px;height:16px;background:#e8eaed;border-radius:8px"></div>
<svg class="a" style="left:825.5px;top:407.5px" width="8" height="4" viewBox="0 0 8 4"><path d="M0 0H8L4 4Z" fill="#000"/></svg>
<div class="a" style="left:859px;top:401px;width:186px;height:16px;background:#eceef0;border-radius:8px"></div>
<svg class="a" style="left:1030.5px;top:407.5px" width="8" height="4" viewBox="0 0 8 4"><path d="M0 0H8L4 4Z" fill="#000"/></svg>
<div class="a" style="left:0px;top:440px;width:866px;height:1px;background:#e2e3e3"></div>
<div class="a" style="left:406px;top:422px;width:82px;height:16px;background:#e8eaed;border-radius:8px"></div>
<svg class="a" style="left:473.5px;top:428.5px" width="8" height="4" viewBox="0 0 8 4"><path d="M0 0H8L4 4Z" fill="#000"/></svg>
<div class="a" style="left:507px;top:422px;width:82px;height:16px;background:#e8eaed;border-radius:8px"></div>
<svg class="a" style="left:574.5px;top:428.5px" width="8" height="4" viewBox="0 0 8 4"><path d="M0 0H8L4 4Z" fill="#000"/></svg>
<div class="a" style="left:731px;top:422px;width:109px;height:16px;background:#e8eaed;border-radius:8px"></div>
<svg class="a" style="left:825.5px;top:428.5px" width="8" height="4" viewBox="0 0 8 4"><path d="M0 0H8L4 4Z" fill="#000"/></svg>
<div class="a" style="left:859px;top:422px;width:186px;height:16px;background:#eceef0;border-radius:8px"></div>
<svg class="a" style="left:1030.5px;top:428.5px" width="8" height="4" viewBox="0 0 8 4"><path d="M0 0H8L4 4Z" fill="#000"/></svg>
<div class="a" style="left:0px;top:461px;width:866px;height:1px;background:#e2e3e3"></div>
<div class="a" style="left:406px;top:443px;width:82px;height:16px;background:#e8eaed;border-radius:8px"></div>
<svg class="a" style="left:473.5px;top:449.5px" width="8" height="4" viewBox="0 0 8 4"><path d="M0 0H8L4 4Z" fill="#000"/></svg>
<div class="a" style="left:507px;top:443px;width:82px;height:16px;background:#e8eaed;border-radius:8px"></div>
<svg class="a" style="left:574.5px;top:449.5px" width="8" height="4" viewBox="0 0 8 4"><path d="M0 0H8L4 4Z" fill="#000"/></svg>
<div class="a" style="left:731px;top:443px;width:109px;height:16px;background:#e8eaed;border-radius:8px"></div>
<svg class="a" style="left:825.5px;top:449.5px" width="8" height="4" viewBox="0 0 8 4"><path d="M0 0H8L4 4Z" fill="#000"/></svg>
<div class="a" style="left:859px;top:443px;width:186px;height:16px;background:#eceef0;border-radius:8px"></div>
<svg class="a" style="left:1030.5px;top:449.5px" width="8" height="4" viewBox="0 0 8 4"><path d="M0 0H8L4 4Z" fill="#000"/></svg>
<div class="a" style="left:0px;top:482px;width:866px;height:1px;background:#e2e3e3"></div>
<div class="a" style="left:406px;top:464px;width:82px;height:16px;background:#e8eaed;border-radius:8px"></div>
<svg class="a" style="left:473.5px;top:470.5px" width="8" height="4" viewBox="0 0 8 4"><path d="M0 0H8L4 4Z" fill="#000"/></svg>
<div class="a" style="left:507px;top:464px;width:82px;height:16px;background:#e8eaed;border-radius:8px"></div>
<svg class="a" style="left:574.5px;top:470.5px" width="8" height="4" viewBox="0 0 8 4"><path d="M0 0H8L4 4Z" fill="#000"/></svg>
<div class="a" style="left:731px;top:464px;width:109px;height:16px;background:#e8eaed;border-radius:8px"></div>
<svg class="a" style="left:825.5px;top:470.5px" width="8" height="4" viewBox="0 0 8 4"><path d="M0 0H8L4 4Z" fill="#000"/></svg>
<div class="a" style="left:859px;top:464px;width:186px;height:16px;background:#eceef0;border-radius:8px"></div>
<svg class="a" style="left:1030.5px;top:470.5px" width="8" height="4" viewBox="0 0 8 4"><path d="M0 0H8L4 4Z" fill="#000"/></svg>
<div class="a" style="left:189px;top:0px;width:1px;height:474px;background:#e2e3e3"></div>
<div class="a" style="left:396px;top:0px;width:1px;height:474px;background:#e2e3e3"></div>
<div class="a" style="left:497px;top:0px;width:1px;height:474px;background:#e2e3e3"></div>
<div class="a" style="left:598px;top:0px;width:1px;height:474px;background:#e2e3e3"></div>
<div class="a" style="left:721px;top:0px;width:1px;height:474px;background:#e2e3e3"></div>
<div class="a" style="left:849px;top:0px;width:1px;height:474px;background:#e2e3e3"></div>
</div>
<div class="t" style="left:49px;top:152.72px;font-size:13.33px;font-weight:700;color:#000;width:186px;overflow:hidden;padding-bottom:4px">Task</div>
<div class="t" style="left:239px;top:152.72px;font-size:13.33px;font-weight:700;color:#000;width:203px;overflow:hidden;padding-bottom:4px">Description</div>
<div class="t" style="left:446px;top:152.72px;font-size:13.33px;font-weight:700;color:#000;width:97px;overflow:hidden;padding-bottom:4px">Assignee</div>
<div class="t" style="left:547px;top:152.72px;font-size:13.33px;font-weight:700;color:#000;width:97px;overflow:hidden;padding-bottom:4px">Priority</div>
<div class="t" style="left:648px;top:152.72px;font-size:13.33px;font-weight:700;color:#000;width:119px;overflow:hidden;padding-bottom:4px">Due</div>
<div class="t" style="left:771px;top:152.72px;font-size:13.33px;font-weight:700;color:#000;width:124px;overflow:hidden;padding-bottom:4px">Status</div>
<div class="t" style="left:899px;top:152.72px;font-size:13.33px;font-weight:700;color:#000;width:13px;overflow:hidden;padding-bottom:4px">Created</div>
<div class="a" style="left:235px;top:149px;width:1px;height:20px;background:#c5d3e0"></div>
<div class="a" style="left:442px;top:149px;width:1px;height:20px;background:#c5d3e0"></div>
<div class="a" style="left:543px;top:149px;width:1px;height:20px;background:#c5d3e0"></div>
<div class="a" style="left:644px;top:149px;width:1px;height:20px;background:#c5d3e0"></div>
<div class="a" style="left:767px;top:149px;width:1px;height:20px;background:#c5d3e0"></div>
<div class="a" style="left:895px;top:149px;width:1px;height:20px;background:#c5d3e0"></div>
<div class="t" style="left:0;width:45px;top:152.89px;font-size:11px;text-align:center;color:#5f6368">1</div>
<div class="t" style="left:0;width:45px;top:177.69px;font-size:11px;text-align:center;color:#5f6368">2</div>
<div class="t" style="left:0;width:45px;top:198.69px;font-size:11px;text-align:center;color:#5f6368">3</div>
<div class="t" style="left:0;width:45px;top:219.69px;font-size:11px;text-align:center;color:#5f6368">4</div>
<div class="t" style="left:0;width:45px;top:240.69px;font-size:11px;text-align:center;color:#5f6368">5</div>
<div class="t" style="left:0;width:45px;top:261.69px;font-size:11px;text-align:center;color:#5f6368">6</div>
<div class="t" style="left:0;width:45px;top:282.69px;font-size:11px;text-align:center;color:#5f6368">7</div>
<div class="t" style="left:0;width:45px;top:303.69px;font-size:11px;text-align:center;color:#5f6368">8</div>
<div class="t" style="left:0;width:45px;top:324.69px;font-size:11px;text-align:center;color:#5f6368">9</div>
<div class="t" style="left:0;width:45px;top:345.69px;font-size:11px;text-align:center;color:#5f6368">10</div>
<div class="t" style="left:0;width:45px;top:366.69px;font-size:11px;text-align:center;color:#5f6368">11</div>
<div class="t" style="left:0;width:45px;top:387.69px;font-size:11px;text-align:center;color:#5f6368">12</div>
<div class="t" style="left:0;width:45px;top:408.69px;font-size:11px;text-align:center;color:#5f6368">13</div>
<div class="t" style="left:0;width:45px;top:429.69px;font-size:11px;text-align:center;color:#5f6368">14</div>
<div class="t" style="left:0;width:45px;top:450.69px;font-size:11px;text-align:center;color:#5f6368">15</div>
<div class="t" style="left:0;width:45px;top:471.69px;font-size:11px;text-align:center;color:#5f6368">16</div>
<div class="t" style="left:0;width:45px;top:492.69px;font-size:11px;text-align:center;color:#5f6368">17</div>
<div class="t" style="left:0;width:45px;top:513.69px;font-size:11px;text-align:center;color:#5f6368">18</div>
<div class="t" style="left:0;width:45px;top:534.69px;font-size:11px;text-align:center;color:#5f6368">19</div>
<div class="t" style="left:0;width:45px;top:555.69px;font-size:11px;text-align:center;color:#5f6368">20</div>
<div class="t" style="left:0;width:45px;top:576.69px;font-size:11px;text-align:center;color:#5f6368">21</div>
<div class="t" style="left:0;width:45px;top:597.69px;font-size:11px;text-align:center;color:#5f6368">22</div>
<div class="t" style="left:0;width:45px;top:618.69px;font-size:11px;text-align:center;color:#5f6368">23</div>
<div class="t" style="left:0;width:45px;top:639.69px;font-size:11px;text-align:center;color:#5f6368">24</div>
<div class="a" style="left:0px;top:194px;width:45px;height:1px;background:#c7c7c7"></div>
<div class="a" style="left:0px;top:215px;width:45px;height:1px;background:#c7c7c7"></div>
<div class="a" style="left:0px;top:236px;width:45px;height:1px;background:#c7c7c7"></div>
<div class="a" style="left:0px;top:257px;width:45px;height:1px;background:#c7c7c7"></div>
<div class="a" style="left:0px;top:278px;width:45px;height:1px;background:#c7c7c7"></div>
<div class="a" style="left:0px;top:299px;width:45px;height:1px;background:#c7c7c7"></div>
<div class="a" style="left:0px;top:320px;width:45px;height:1px;background:#c7c7c7"></div>
<div class="a" style="left:0px;top:341px;width:45px;height:1px;background:#c7c7c7"></div>
<div class="a" style="left:0px;top:362px;width:45px;height:1px;background:#c7c7c7"></div>
<div class="a" style="left:0px;top:383px;width:45px;height:1px;background:#c7c7c7"></div>
<div class="a" style="left:0px;top:404px;width:45px;height:1px;background:#c7c7c7"></div>
<div class="a" style="left:0px;top:425px;width:45px;height:1px;background:#c7c7c7"></div>
<div class="a" style="left:0px;top:446px;width:45px;height:1px;background:#c7c7c7"></div>
<div class="a" style="left:0px;top:467px;width:45px;height:1px;background:#c7c7c7"></div>
<div class="a" style="left:0px;top:488px;width:45px;height:1px;background:#c7c7c7"></div>
<div class="a" style="left:0px;top:509px;width:45px;height:1px;background:#c7c7c7"></div>
<div class="a" style="left:0px;top:530px;width:45px;height:1px;background:#c7c7c7"></div>
<div class="a" style="left:0px;top:551px;width:45px;height:1px;background:#c7c7c7"></div>
<div class="a" style="left:0px;top:572px;width:45px;height:1px;background:#c7c7c7"></div>
<div class="a" style="left:0px;top:593px;width:45px;height:1px;background:#c7c7c7"></div>
<div class="a" style="left:0px;top:614px;width:45px;height:1px;background:#c7c7c7"></div>
<div class="a" style="left:0px;top:635px;width:45px;height:1px;background:#c7c7c7"></div>
<div class="a" style="left:0px;top:648px;width:46px;height:12px;background:#f8f9fa"></div>
<svg class="a" style="left:229px;top:174px" width="6" height="6" viewBox="0 0 6 6"><path d="M0 0H6V6Z" fill="#f4b400"/></svg>
<div class="a" style="left:912px;top:174px;width:11px;height:474px;background:#fff;border-left:1px solid #d6d8db;box-sizing:border-box"></div>
<div class="a" style="left:914px;top:175px;width:9px;height:26px;background:#dadce0;border-radius:5px"></div>
<div class="a" style="left:912px;top:615px;width:11px;height:16px;background:#f8f9fa;border:1px solid #e0e0e0;box-sizing:border-box"></div>
<div class="a" style="left:912px;top:631px;width:11px;height:17px;background:#f8f9fa;border:1px solid #e0e0e0;box-sizing:border-box"></div>
<svg class="a" style="left:914px;top:620px" width="7" height="4" viewBox="0 0 7 4"><path d="M0 4H7L3.5 0Z" fill="#9aa0a6"/></svg>
<svg class="a" style="left:914px;top:637px" width="7" height="4" viewBox="0 0 7 4"><path d="M0 0H7L3.5 4Z" fill="#9aa0a6"/></svg>
<div class="a" style="left:46px;top:648px;width:866px;height:11px;background:#fff;border-top:1px solid #e8eaed;box-sizing:border-box"></div>
<div class="a" style="left:47px;top:649px;width:233px;height:9px;background:#dadce0;border-radius:5px"></div>
<div class="a" style="left:880px;top:647px;width:17px;height:12px;background:#f8f9fa;border:1px solid #e0e0e0;box-sizing:border-box"></div>
<div class="a" style="left:896px;top:647px;width:17px;height:12px;background:#f8f9fa;border:1px solid #e0e0e0;box-sizing:border-box"></div>
<svg class="a" style="left:886px;top:650px" width="4" height="7" viewBox="0 0 4 7"><path d="M4 0V7L0 3.5Z" fill="#9aa0a6"/></svg>
<svg class="a" style="left:903px;top:650px" width="4" height="7" viewBox="0 0 4 7"><path d="M0 0V7L4 3.5Z" fill="#9aa0a6"/></svg>
<div class="a" style="left:912px;top:647px;width:11px;height:12px;background:#f8f9fa"></div>
<div class="a" style="left:0px;top:659px;width:1224px;height:39px;background:#f1f3f4;border-top:1px solid #e0e2e5;box-sizing:border-box"></div>
<div class="a" style="left:49.7px;top:676.2px;width:10.6px;height:2px;background:#444746"></div>
<div class="a" style="left:54px;top:672px;width:2px;height:10.4px;background:#444746"></div>
<div class="a" style="left:79.8px;top:672.3px;width:12.5px;height:1.7px;background:#444746"></div>
<div class="a" style="left:79.8px;top:675.9px;width:12.5px;height:1.7px;background:#444746"></div>
<div class="a" style="left:79.8px;top:679.5px;width:12.5px;height:1.7px;background:#444746"></div>
<div class="a" style="left:79.8px;top:683.1px;width:12.5px;height:1.7px;background:#444746"></div>
<div class="a" style="left:117px;top:659px;width:118px;height:39px;background:#fff;box-shadow:0 1px 2px rgba(60,64,67,.3)"></div>
<svg class="a" style="left:133px;top:671px" width="16" height="15" viewBox="0 0 16 15"><path d="M0 0H16V15L13 12H0Z" fill="#188038"/><text x="5" y="10" font-family="Liberation Sans" font-size="10" font-weight="700" fill="#fff">1</text></svg>
<div class="t " style="left:155.9px;top:671.47px;font-size:14.8px;color:#188038;-webkit-text-stroke:0.35px #188038">Sheet1</div>
<svg class="a" style="left:211.5px;top:677px" width="8" height="4" viewBox="0 0 8 4" preserveAspectRatio="none"><path d="M0 0H8L4 4Z" fill="#188038"/></svg>
<div class="a" style="left:1119px;top:659px;width:105px;height:39px;background:#f8f9fa;border-left:1px solid #dadce0;border-top:1px solid #e0e2e5;box-sizing:border-box"></div>
<svg class="a" style="left:1132px;top:670px" width="18" height="21" viewBox="0 0 18 21"><path d="M2 0H16C17.1 0 18 .9 18 2V15.7C18 16.8 17.1 17.7 16 17.7H11L8.7 20.4L6.4 17.7H2C.9 17.7 0 16.8 0 15.7V2C0 .9.9 0 2 0Z" fill="#1e8e3e"/><path d="M8.9 3.7Q9.9 8 14.1 9Q9.9 10 8.9 14.3Q7.9 10 3.7 9Q7.9 8 8.9 3.7Z" fill="#fff"/></svg>
<div class="t " style="left:1164.3px;top:673.81px;font-size:11.8px;color:#1e8e3e;-webkit-text-stroke:0.15px #1e8e3e">Explore</div>
<div class="a" style="left:923px;top:62px;width:301px;height:597px;background:#fff"></div>
<div class="a" style="left:918px;top:62px;width:5px;height:597px;background:linear-gradient(to right, rgba(0,0,0,0), rgba(0,0,0,0.035))"></div>
<div class="a" style="left:923px;top:62px;width:1px;height:597px;background:#e3e3e3"></div>
<div class="t " style="left:939.8px;top:80.61px;font-size:17px;color:#1f1f1f;-webkit-text-stroke:0.5px #1f1f1f">Data validation rules</div>
<svg class="a" style="left:1188.5px;top:83px" width="17" height="17" viewBox="0 0 24 24" preserveAspectRatio="none"><path fill="#444746" d="M19 6.41L17.59 5 12 10.59 6.41 5 5 6.41 10.59 12 5 17.59 6.41 19 12 13.41 17.59 19 19 17.59 13.41 12z"/></svg>
<div class="a" style="left:924px;top:118px;width:300px;height:1px;background:#dadce0"></div>
<div class="t " style="left:948.7px;top:130.24px;font-size:13.3px;color:#303134;font-weight:700">Value contains one</div>
<div class="t " style="left:948.7px;top:146.04px;font-size:13.3px;color:#303134;font-weight:700">from list</div>
<div class="t " style="left:948.7px;top:176.37px;font-size:13.5px;color:#3c4043">C2:C1000,G2:G1000</div>
<div class="a" style="left:924px;top:203px;width:300px;height:1px;background:#dadce0"></div>
<div class="t " style="left:948.7px;top:215.24px;font-size:13.3px;color:#303134;font-weight:700">Value contains one</div>
<div class="t " style="left:948.7px;top:231.04px;font-size:13.3px;color:#303134;font-weight:700">from list</div>
<div class="t " style="left:948.7px;top:261.37px;font-size:13.5px;color:#3c4043">D2:D1000</div>
<div class="a" style="left:924px;top:288px;width:300px;height:1px;background:#dadce0"></div>
<div class="t " style="left:948.7px;top:300.24px;font-size:13.3px;color:#303134;font-weight:700">Value contains one</div>
<div class="t " style="left:948.7px;top:316.04px;font-size:13.3px;color:#303134;font-weight:700">from list</div>
<div class="t " style="left:948.7px;top:346.37px;font-size:13.5px;color:#3c4043">F2:F1000</div>
<div class="a" style="left:924px;top:373px;width:300px;height:1px;background:#dadce0"></div>
<div class="a" style="left:924px;top:374px;width:300px;height:85px;background:#f1f3f4"></div>
<div class="t " style="left:948.7px;top:385.24px;font-size:13.3px;color:#303134;font-weight:700">Value contains one</div>
<div class="t " style="left:948.7px;top:401.04px;font-size:13.3px;color:#303134;font-weight:700">from list</div>
<div class="t " style="left:948.7px;top:431.37px;font-size:13.5px;color:#3c4043">H2</div>
<div class="a" style="left:924px;top:458px;width:300px;height:1px;background:#dadce0"></div>
<div class="a" style="left:924px;top:458px;width:300px;height:2px;background:#dadce0"></div>
<svg class="a" style="left:1185px;top:401.8px" width="24" height="24" viewBox="0 0 24 24" preserveAspectRatio="none"><path fill="#6f7276" d="M15 4V3H9v1H4v2h1v13c0 1.1.9 2 2 2h10c1.1 0 2-.9 2-2V6h1V4h-5zm2 15H7V6h10v13zM9 8h2v9H9zm4 0h2v9h-2z"/></svg>
<div class="a" style="left:967px;top:476px;width:124px;height:36px;border:1px solid #dadce0;border-radius:4px;box-sizing:border-box;background:#fff"></div>
<div class="t " style="left:992.6px;top:487.03px;font-size:14.5px;color:#5f6368;-webkit-text-stroke:0.2px #5f6368">Remove all</div>
<div class="a" style="left:1095px;top:476px;width:109px;height:36px;border:1px solid #dadce0;border-radius:4px;box-sizing:border-box;background:#fff"></div>
<div class="a" style="left:1111px;top:493.2px;width:10.7px;height:2px;background:#188038"></div>
<div class="a" style="left:1115.4px;top:488.5px;width:2px;height:11.2px;background:#188038"></div>
<div class="t " style="left:1132px;top:486.60px;font-size:15px;color:#188038;-webkit-text-stroke:0.3px #188038">Add rule</div>
<div class="a" style="left:1224px;top:62px;width:1px;height:636px;background:#dadce0"></div>
<svg class="a" style="left:1244px;top:80px" width="18" height="19" viewBox="0 0 18 19">
<path d="M1.5 0H14V3.5H3.5V15H0V1.5C0 .7.7 0 1.5 0Z" fill="#4285f4"/>
<path d="M14 0H16.5C17.3 0 18 .7 18 1.5V3.5H14Z" fill="#1967d2"/>
<path d="M14 3.5H18V14.5H14Z" fill="#fbbc04"/>
<path d="M3.5 15H14V19H3.5Z" fill="#34a853"/>
<path d="M0 15H3.5V19H1.5C.7 19 0 18.3 0 17.5Z" fill="#188038"/>
<path d="M14 14.5H18L14 19Z" fill="#ea4335"/>
<path d="M3.5 3.5H14V15H3.5Z" fill="#fff"/>
<text x="4.3" y="12.8" font-family="Liberation Sans" font-size="8" fill="#3c5a9a">31</text>
</svg>
<svg class="a" style="left:1244px;top:136px" width="18" height="19" viewBox="0 0 18 19">
<rect x="0" y="0" width="18" height="19" rx="1.5" fill="#fbbc04"/>
<circle cx="9" cy="8" r="3.6" fill="#fff"/>
<rect x="7.2" y="11.5" width="3.6" height="2.5" fill="#fff"/>
</svg>
<svg class="a" style="left:1243px;top:192px" width="20" height="20" viewBox="0 0 20 20">
<circle cx="9.5" cy="10.5" r="7" fill="none" stroke="#1a73e8" stroke-width="2.6"/>
<path d="M5.8 10.2L8.6 13L17.5 4.2" fill="none" stroke="#1a73e8" stroke-width="2.6"/>
</svg>
<svg class="a" style="left:1245px;top:248px" width="16" height="19" viewBox="0 0 16 19">
<circle cx="8" cy="4" r="3.6" fill="#1a73e8"/>
<path d="M1 14C1 10.5 4 9.5 8 9.5C12 9.5 15 10.5 15 14V17C15 18 14.3 18.7 13.5 18.7H2.5C1.7 18.7 1 18 1 17Z" fill="#1a73e8"/>
</svg>
<svg class="a" style="left:1245px;top:305px" width="14" height="20" viewBox="0 0 14 20">
<path d="M7 0C3.1 0 0 3.1 0 7C0 12 7 20 7 20C7 20 14 12 14 7C14 3.1 10.9 0 7 0Z" fill="#34a853"/>
<path d="M7 0C3.1 0 0 3.1 0 7C0 8.5 .6 10 1.5 11.5L7 5Z" fill="#4285f4"/>
<path d="M7 0L1.5 5.5H12.5C11.7 2.3 9.6 0 7 0Z" fill="#ea4335"/>
<path d="M12.5 5.5H7L3 11C4.5 14 7 17 7 17L14 7C14 6.5 13.9 6 12.5 5.5Z" fill="#fbbc04"/>
<circle cx="7" cy="7" r="2.4" fill="#fff"/>
</svg>
<div class="a" style="left:1243px;top:358px;width:20px;height:1px;background:#dadce0"></div>
<div class="a" style="left:1245.7px;top:402.4px;width:14.3px;height:2px;background:#1f1f1f"></div>
<div class="a" style="left:1251.9px;top:396.3px;width:2px;height:14.1px;background:#1f1f1f"></div>
<svg class="a" style="left:1243px;top:661px" width="18" height="18" viewBox="0 0 24 24" preserveAspectRatio="none"><path fill="#444746" d="M10 6L8.59 7.41 13.17 12l-4.58 4.59L10 18l6-6z"/></svg>
<div class="a" style="left:1280px;top:68px;width:1px;height:630px;background:#3c3c3c"></div>
<div class="a" style="left:1276px;top:693px;width:5px;height:5px;background:radial-gradient(circle at 0 0, transparent 4px, #2a2a2a 5px)"></div>
<div class="a" style="left:0;top:693px;width:5px;height:5px;background:radial-gradient(circle at 5px 0, transparent 4px, #111 5px)"></div>
</body></html>
